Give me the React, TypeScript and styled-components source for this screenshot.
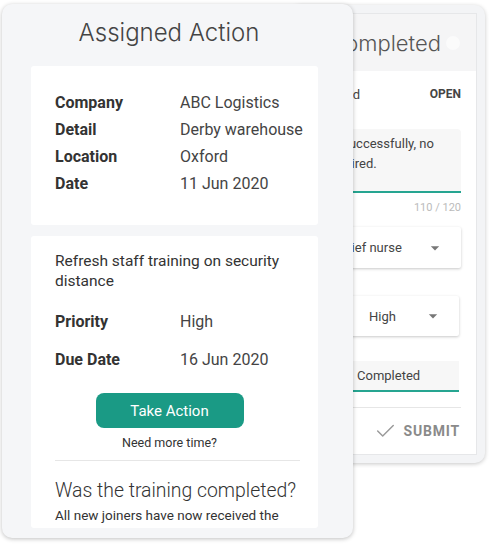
import styled, { createGlobalStyle } from 'styled-components';

const GlobalStyle = createGlobalStyle`
  body {
    margin: 0;
    background: #ffffff;
    font-family: Roboto, "Noto Sans", sans-serif;
    color: #333;
  }
`;

const Stage = styled.div`
  position: relative;
  width: 500px;
  height: 550px;
  overflow: hidden;
`;

/* ---------- back card (completed form) ---------- */

const BackCard = styled.div`
  margin: 5px 0 0 290px;
  width: 179px;
  padding: 8px;
  background: #f3f4f6;
  border-radius: 10px;
  box-shadow: 0 1px 4px rgba(0, 0, 0, 0.22);
`;

const Panel = styled.div`
  background: #ffffff;
  border: 1px solid #e6e7e9;
  height: 440px;
  display: flex;
  flex-direction: column;
`;

const PanelHeader = styled.div`
  height: 57px;
  background: #f5f5f6;
  display: flex;
  align-items: center;
  justify-content: flex-end;
  gap: 5px;
  padding-right: 16px;
`;

const PanelTitle = styled.div`
  font-family: Inter, "Noto Sans", sans-serif;
  font-size: 22px;
  font-weight: 300;
  color: #555;
  white-space: nowrap;
`;

const CloseDot = styled.div`
  flex: none;
  width: 14px;
  height: 14px;
  border-radius: 50%;
  background: rgba(255, 255, 255, 0.6);
`;

const PanelBody = styled.div`
  padding: 10px 15px 0 16px;
  display: flex;
  flex-direction: column;
`;

const StatusRow = styled.div`
  display: flex;
  justify-content: space-between;
  align-items: center;
  height: 26px;
  font-size: 13px;
  color: #444;
  white-space: nowrap;
`;

const StatusTag = styled.span`
  font-size: 12px;
  font-weight: 700;
  color: #444;
`;

const TextArea = styled.div<{ $width: number }>`
  width: ${(p) => p.$width}px;
  flex: none;
  box-sizing: border-box;
  height: 64px;
  padding: 5px 8px 0 0;
  background: #f7f7f7;
  border-radius: 4px 4px 0 0;
  border-bottom: 2px solid #26a591;
  font-size: 13px;
  line-height: 20px;
  color: #444;
  white-space: nowrap;
`;

const Counter = styled.div`
  margin-top: 8px;
  line-height: 14px;
  font-size: 11px;
  color: #bbb;
  text-align: right;
`;

const FieldRow = styled.div<{ $top: number; $right?: number }>`
  display: flex;
  justify-content: flex-end;
  margin-top: ${(p) => p.$top}px;
  margin-right: ${(p) => p.$right ?? 0}px;
`;

const Select = styled.div<{ $width: number; $height: number; $indent: number }>`
  width: ${(p) => p.$width}px;
  height: ${(p) => p.$height}px;
  padding-left: ${(p) => p.$indent}px;
  padding-right: 16px;
  box-sizing: border-box;
  display: flex;
  align-items: center;
  justify-content: space-between;
  background: #fff;
  border-radius: 2px;
  box-shadow: 0 1px 3px rgba(0, 0, 0, 0.22);
  font-size: 13px;
  color: #444;
  white-space: nowrap;
`;

const InputBox = styled.div<{ $width: number }>`
  width: ${(p) => p.$width}px;
  height: 31px;
  padding-left: 12px;
  box-sizing: border-box;
  display: flex;
  align-items: center;
  background: #f7f7f7;
  border-bottom: 2px solid #26a591;
  font-size: 13px;
  color: #444;
`;

const Divider = styled.div<{ $top: number }>`
  margin-top: ${(p) => p.$top}px;
  height: 1px;
  background: #e6e6e6;
`;

const SubmitRow = styled.div`
  height: 46px;
  display: flex;
  align-items: center;
  justify-content: flex-end;
  gap: 8px;
  padding-right: 1px;
`;

const SubmitText = styled.span`
  font-size: 14px;
  font-weight: 700;
  letter-spacing: 0.8px;
  color: #8a8a8a;
`;

/* ---------- front card (assigned action) ---------- */

const FrontCard = styled.div`
  position: absolute;
  left: 2px;
  top: 4px;
  width: 351px;
  height: 534px;
  box-sizing: border-box;
  padding: 14px 35px 10px 29px;
  background: #f5f6f8;
  border-radius: 10px;
  box-shadow: 0 1px 4px rgba(0, 0, 0, 0.25);
  overflow: hidden;
  z-index: 2;
  display: flex;
  flex-direction: column;
`;

const Title = styled.div`
  font-family: Inter, "Noto Sans", sans-serif;
  font-size: 24px;
  font-weight: 300;
  line-height: 30px;
  color: #444;
  text-align: center;
  margin-right: 11px;
`;

const InfoCard = styled.div<{ $top: number; $fill?: boolean }>`
  margin-top: ${(p) => p.$top}px;
  flex: ${(p) => (p.$fill ? '1 1 0' : 'none')};
  min-height: 0;
  overflow: hidden;
  background: #fff;
  border-radius: 3px;
  padding: 0 18px 0 24px;
`;

const DetailList = styled.div`
  padding: 23px 0 28px;
`;

const DetailRow = styled.div<{ $height: number }>`
  display: grid;
  grid-template-columns: 125px 1fr;
  align-items: center;
  height: ${(p) => p.$height}px;
  font-size: 16px;
  white-space: nowrap;
`;

const Label = styled.span`
  font-weight: 700;
  color: #333;
`;

const Value = styled.span`
  color: #444;
`;

const Description = styled.div`
  padding-top: 15px;
  font-size: 15.5px;
  line-height: 20px;
  color: #333;
  margin-bottom: 11px;
`;

const ActionBlock = styled.div`
  display: flex;
  flex-direction: column;
  align-items: center;
  padding-right: 16px;
  margin-top: 15px;
`;

const PrimaryButton = styled.button`
  width: 148px;
  height: 35px;
  border: none;
  border-radius: 8px;
  background: #1a9a85;
  color: #fff;
  font-family: inherit;
  font-size: 15px;
  cursor: pointer;
`;

const HelpText = styled.div`
  margin-top: 8px;
  font-size: 12.5px;
  line-height: 14px;
  color: #333;
`;

const Question = styled.div`
  margin-top: 16px;
  font-size: 19.4px;
  font-weight: 300;
  line-height: 28px;
  color: #333;
  white-space: nowrap;
`;

const Answer = styled.div`
  font-size: 13.5px;
  line-height: 20px;
  color: #333;
  white-space: nowrap;
`;

const details = [
  ['Company', 'ABC Logistics'],
  ['Detail', 'Derby warehouse'],
  ['Location', 'Oxford'],
  ['Date', '11 Jun 2020'],
];

const Caret = () => (
  <svg width="20" height="20" viewBox="0 0 24 24" fill="#777">
    <path d="M7 10l5 5 5-5z" />
  </svg>
);

const CheckIcon = () => (
  <svg width="22" height="22" viewBox="0 0 24 24" fill="none" stroke="#9a9a9a" strokeWidth="1.6" strokeLinecap="round" strokeLinejoin="round">
    <path d="M21 6 9.5 17.5 4 12" />
  </svg>
);

export default function App() {
  return (
    <Stage>
      <GlobalStyle />

      <BackCard>
        <Panel>
          <PanelHeader>
            <PanelTitle>Completed</PanelTitle>
            <CloseDot />
          </PanelHeader>
          <PanelBody>
            <StatusRow>
              <span>Created</span>
              <StatusTag>OPEN</StatusTag>
            </StatusRow>
            <FieldRow $top={22}>
              <TextArea $width={152}>
                Done successfully, no
                <br />
                fix required.
              </TextArea>
            </FieldRow>
            <Counter>110 / 120</Counter>
            <FieldRow $top={12}>
              <Select $width={137} $height={41} $indent={12}>
                <span>Chief nurse</span>
                <Caret />
              </Select>
            </FieldRow>
            <FieldRow $top={28} $right={2}>
              <Select $width={115} $height={40} $indent={25}>
                <span>High</span>
                <Caret />
              </Select>
            </FieldRow>
            <FieldRow $top={25} $right={2}>
              <InputBox $width={114}>Completed</InputBox>
            </FieldRow>
            <Divider $top={15} />
            <SubmitRow>
              <CheckIcon />
              <SubmitText>SUBMIT</SubmitText>
            </SubmitRow>
          </PanelBody>
        </Panel>
      </BackCard>

      <FrontCard>
        <Title>Assigned Action</Title>
        <InfoCard $top={18}>
          <DetailList>
            {details.map(([label, value]) => (
              <DetailRow key={label} $height={27}>
                <Label>{label}</Label>
                <Value>{value}</Value>
              </DetailRow>
            ))}
          </DetailList>
        </InfoCard>
        <InfoCard $top={11} $fill>
          <Description>Refresh staff training on security distance</Description>
          <DetailRow $height={38}>
            <Label>Priority</Label>
            <Value>High</Value>
          </DetailRow>
          <DetailRow $height={38}>
            <Label>Due Date</Label>
            <Value>16 Jun 2020</Value>
          </DetailRow>
          <ActionBlock>
            <PrimaryButton>Take Action</PrimaryButton>
            <HelpText>Need more time?</HelpText>
          </ActionBlock>
          <Divider $top={10} />
          <Question>Was the training completed?</Question>
          <Answer>All new joiners have now received the</Answer>
        </InfoCard>
      </FrontCard>
    </Stage>
  );
}
